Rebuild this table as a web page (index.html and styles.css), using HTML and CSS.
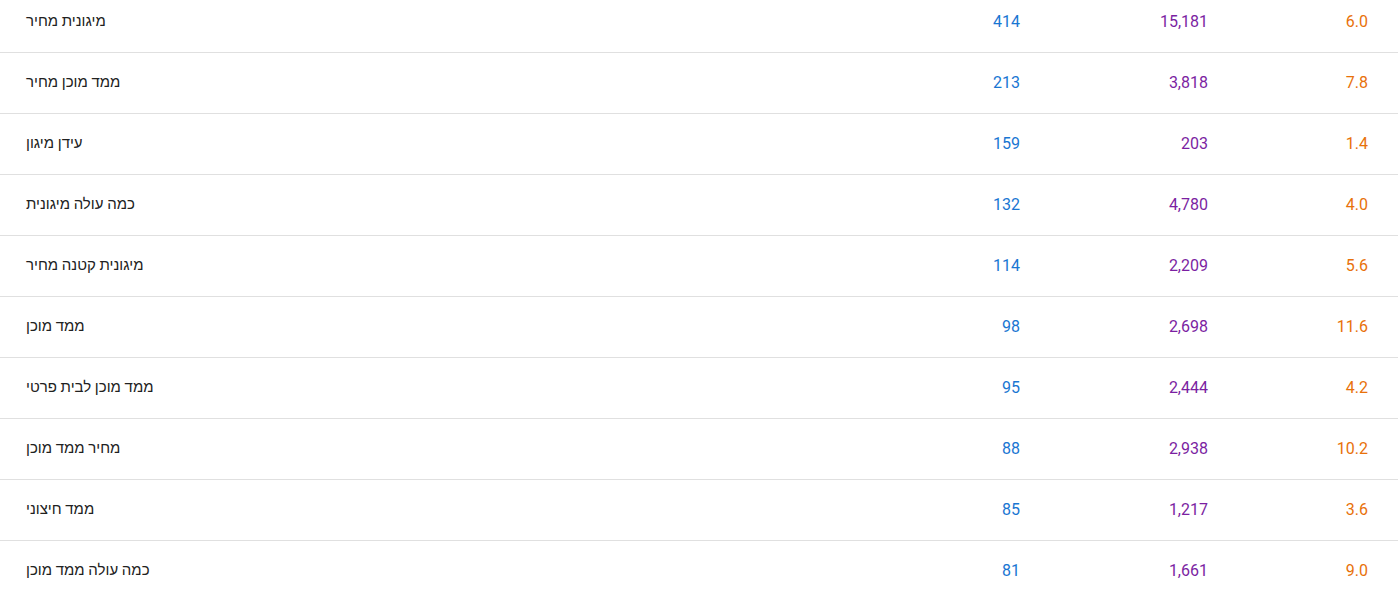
FILE: index.html
```html
<!DOCTYPE html>
<html lang="he">
<head>
<meta charset="utf-8">
<link rel="stylesheet" href="styles.css">
</head>
<body>
<div class="table">
  <div class="row"><div class="kw">מיגונית מחיר</div><div class="n a">414</div><div class="n b">15,181</div><div class="n c">6.0</div></div>
  <div class="row"><div class="kw">ממד מוכן מחיר</div><div class="n a">213</div><div class="n b">3,818</div><div class="n c">7.8</div></div>
  <div class="row"><div class="kw">עידן מיגון</div><div class="n a">159</div><div class="n b">203</div><div class="n c">1.4</div></div>
  <div class="row"><div class="kw">כמה עולה מיגונית</div><div class="n a">132</div><div class="n b">4,780</div><div class="n c">4.0</div></div>
  <div class="row"><div class="kw">מיגונית קטנה מחיר</div><div class="n a">114</div><div class="n b">2,209</div><div class="n c">5.6</div></div>
  <div class="row"><div class="kw">ממד מוכן</div><div class="n a">98</div><div class="n b">2,698</div><div class="n c">11.6</div></div>
  <div class="row"><div class="kw">ממד מוכן לבית פרטי</div><div class="n a">95</div><div class="n b">2,444</div><div class="n c">4.2</div></div>
  <div class="row"><div class="kw">מחיר ממד מוכן</div><div class="n a">88</div><div class="n b">2,938</div><div class="n c">10.2</div></div>
  <div class="row"><div class="kw">ממד חיצוני</div><div class="n a">85</div><div class="n b">1,217</div><div class="n c">3.6</div></div>
  <div class="row"><div class="kw">כמה עולה ממד מוכן</div><div class="n a">81</div><div class="n b">1,661</div><div class="n c">9.0</div></div>
</div>
</body>
</html>
```
FILE: styles.css
```css
html, body {
  margin: 0;
  padding: 0;
  background: #ffffff;
  overflow: hidden;
}
body {
  font-family: Roboto, "Liberation Sans", "Noto Sans", sans-serif;
  font-size: 16px;
  color: #212121;
}
.table {
  margin-top: -8px;
  width: 1398px;
}
.row {
  box-sizing: border-box;
  display: grid;
  grid-template-columns: 1fr 120px 188px 160px;
  align-items: center;
  height: 61px;
  border-bottom: 1px solid #e0e0e0;
  padding: 0 30px 2px 26px;
}
.kw {
  font-size: 15px;
  text-align: left;
  direction: rtl;
  unicode-bidi: plaintext;
  justify-self: start;
}
.n {
  text-align: right;
}
.a { color: #1976d2; }
.b { color: #7b1fa2; }
.c { color: #e8710a; }
```
